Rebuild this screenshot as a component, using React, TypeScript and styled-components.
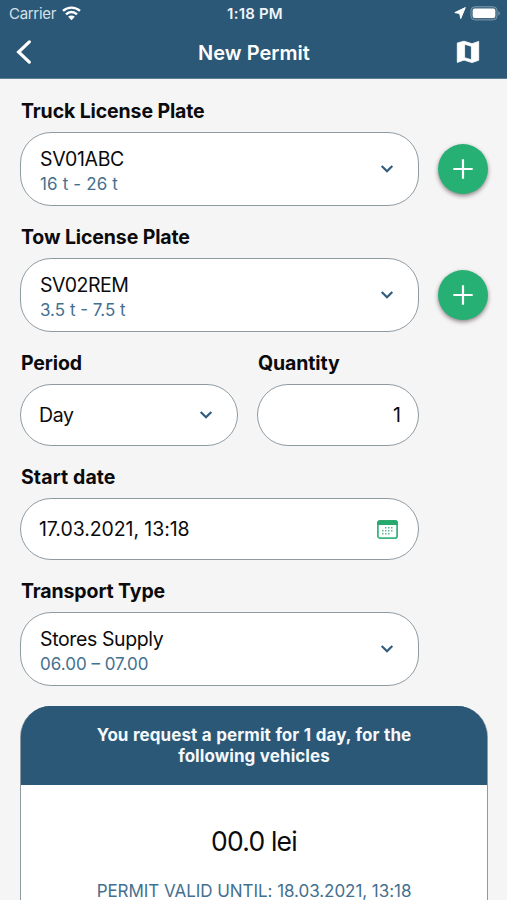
import React from "react";
import styled, { createGlobalStyle } from "styled-components";

const navy = "#2b5876";
const green = "#27b074";
const outline = "#8f9ba3";

const GlobalStyle = createGlobalStyle`
  * { box-sizing: border-box; }
  body { margin: 0; background: #f5f5f5; }
`;

const Screen = styled.div`
  width: 507px;
  height: 900px;
  overflow: hidden;
  background: #f5f5f5;
  color: #0b0b0d;
  font-family: Inter, "Liberation Sans", sans-serif;
  white-space: nowrap;
`;

const TopBar = styled.header`
  height: 79px;
  background: ${navy};
  color: #fff;
  border-bottom: 1px solid #5c7f96;
`;

const StatusBar = styled.div`
  display: grid;
  grid-template-columns: 1fr auto 1fr;
  align-items: center;
  height: 27px;
  padding: 0 6px 0 9px;
`;

const Carrier = styled.div`
  display: flex;
  align-items: center;
  gap: 6px;
  color: #d5e0e8;
  font-size: 15px;
  letter-spacing: -0.3px;
`;

const Clock = styled.div`
  font-size: 15px;
  font-weight: 600;
  letter-spacing: 0.2px;
  color: #eef4f8;
`;

const StatusIcons = styled.div`
  display: flex;
  justify-content: flex-end;
  align-items: center;
  gap: 4px;
`;

const NavBar = styled.div`
  display: grid;
  grid-template-columns: 1fr auto 1fr;
  align-items: center;
  height: 50px;
  padding: 0 27px 0 16px;
`;

const NavTitle = styled.h1`
  margin: 0;
  padding: 2px 0 0 12px;
  font-size: 20px;
  line-height: 24px;
  font-weight: 600;
  letter-spacing: 0.02px;
`;

const NavButton = styled.button<{ $end?: boolean }>`
  display: flex;
  justify-self: ${(p) => (p.$end ? "end" : "start")};
  padding: 0;
  border: 0;
  background: none;
  color: #fff;
`;

const Form = styled.main`
  display: flex;
  flex-direction: column;
  gap: 20px;
  padding: 21px 19px 0 20px;
`;

const FieldRow = styled.div`
  display: grid;
  grid-template-columns: 399px 50px;
  column-gap: 19px;
  align-items: end;
`;

const SplitRow = styled.div`
  display: grid;
  grid-template-columns: 218px 162px;
  column-gap: 19px;
`;

const Field = styled.div`
  display: flex;
  flex-direction: column;
  gap: 10px;
`;

const Label = styled.label<{ $track?: number }>`
  padding-left: 1px;
  height: 22px;
  font-size: 19.5px;
  line-height: 22px;
  font-weight: 700;
  letter-spacing: ${(p) => p.$track ?? -0.12}px;
`;

const Box = styled.div<{ $tall?: boolean }>`
  display: flex;
  align-items: center;
  justify-content: space-between;
  height: ${(p) => (p.$tall ? 74 : 62)}px;
  padding: 0 ${(p) => (p.$tall ? 24 : 17)}px 0 ${(p) => (p.$tall ? 19 : 18)}px;
  border: 1px solid ${outline};
  border-radius: 31px;
  background: #fff;
`;

const Lines = styled.div`
  padding-top: 3px;
`;

const Value = styled.div<{ $track?: number }>`
  font-size: 19.5px;
  line-height: 26px;
  letter-spacing: ${(p) => p.$track ?? 0}px;
`;

const Detail = styled.div<{ $track?: number }>`
  font-size: 17px;
  line-height: 24px;
  color: #44708f;
  letter-spacing: ${(p) => p.$track ?? 0}px;
`;

const IconSlot = styled.span<{ $right?: number }>`
  display: flex;
  margin-right: ${(p) => p.$right ?? 0}px;
`;

const AddButton = styled.button`
  display: flex;
  align-items: center;
  justify-content: center;
  width: 50px;
  height: 50px;
  margin-bottom: 12px;
  padding: 0;
  border: 0;
  border-radius: 50%;
  background: ${green};
  box-shadow: 0 2px 4px rgba(40, 20, 30, 0.5);
`;

const Summary = styled.section`
  width: 468px;
  height: 260px;
  overflow: hidden;
  border: 1px solid ${outline};
  border-top: 0;
  border-radius: 31px 31px 0 0;
  background: linear-gradient(${navy} 79px, #fff 79px) border-box;
  text-align: center;
`;

const SummaryHead = styled.div`
  height: 79px;
  padding-top: 19px;
  background: ${navy};
  color: #f4f8fb;
  font-size: 17px;
  line-height: 21px;
  font-weight: 700;
  letter-spacing: 0.06px;
  word-spacing: 0.45px;
`;

const Price = styled.div`
  margin-top: 38px;
  font-size: 26.5px;
  line-height: 36px;
  letter-spacing: -0.8px;
`;

const Validity = styled.div`
  margin-top: 20px;
  font-size: 17px;
  line-height: 24px;
  letter-spacing: -0.05px;
  color: #44708f;
`;

const WifiIcon = () => (
  <svg width="19" height="15" viewBox="0 0 19 15" fill="none" stroke="#fff" strokeWidth="2.4">
    <path d="M1 4.8C5.8.5 13.200.5 18 4.800" />
    <path d="M4 8.300C7.200 5.300 11.800 5.300 15 8.300" />
    <path d="M6.100 10.800C8.200 9 10.800 9 12.900 10.800L9.500 14.200Z" fill="#fff" stroke="none" />
  </svg>
);

const LocationIcon = () => (
  <svg width="12" height="13" viewBox="0 0 12 13">
    <path
      d="M11.300.6.8 5.600 5.700 6.500 6.700 11.600Z"
      fill="#fff"
      stroke="#fff"
      strokeWidth="1"
      strokeLinejoin="round"
    />
  </svg>
);

const BatteryIcon = () => (
  <svg width="31" height="15" viewBox="0 0 31 15">
    <rect x="0.900" y="0.700" width="26.200" height="13.200" rx="4" fill="#41687f" stroke="#7895a8" strokeWidth="1" />
    <rect x="2.700" y="2.600" width="22.600" height="9.400" rx="2" fill="#fff" />
    <path d="M28.500 5Q31 7.300 28.500 9.800Z" fill="#8ca6b6" />
  </svg>
);

const BackIcon = () => (
  <svg width="16" height="24" viewBox="0 0 16 24" fill="none" stroke="#fff" strokeWidth="3.200">
    <path d="M13.300 1.900 2.600 12 13.300 22.100" strokeLinejoin="miter" strokeLinecap="round" />
  </svg>
);

const MapIcon = () => (
  <svg width="24" height="24" viewBox="0 0 24 24">
    <path
      fill="#fff"
      fillRule="evenodd"
      stroke="#fff"
      strokeWidth="0.800"
      strokeLinejoin="round"
      d="M1.300 3 8 1.200 16 3.700 22.700 1.400V20.300L16 22.600 8 20.100 1.300 22.400ZM8.600 4.200V17.700L15.400 19.800V6.300Z"
    />
  </svg>
);

const ChevronIcon = () => (
  <svg width="14" height="10" viewBox="0 0 14 10" fill="none" stroke="#2f5d80" strokeWidth="2.200">
    <path d="M1.700 2 7 7.300 12.300 2" />
  </svg>
);

const PlusIcon = () => (
  <svg width="20" height="20" viewBox="0 0 20 20" fill="none" stroke="#fff" strokeWidth="2.200">
    <path d="M10 .3V19.700M.3 10H19.700" />
  </svg>
);

const days = [
  [9, 8], [12, 8], [15, 8],
  [6, 11], [9, 11], [12, 11], [15, 11],
  [6, 14], [9, 14], [12, 14],
];

const CalendarIcon = () => (
  <svg width="21" height="19" viewBox="0 0 21 19">
    <rect x="0.900" y="0.900" width="19.200" height="17.200" rx="2.200" fill="#fff" stroke="#3db581" strokeWidth="1.800" />
    <path d="M.2 5V2.800Q.2.200 2.800.2H18.200Q20.800.2 20.800 2.800V5Z" fill="#27a86d" />
    {days.map(([x, y]) => (
      <rect key={`${x}-${y}`} x={x - 1} y={y - 1} width="1.500" height="1.500" fill="#62b892" />
    ))}
  </svg>
);

type PlateProps = {
  label: string;
  value: string;
  detail: string;
  valueTrack?: number;
  detailTrack?: number;
  addable?: boolean;
};

const PlateField = ({ label, value, detail, valueTrack, detailTrack, addable }: PlateProps) => (
  <FieldRow>
    <Field>
      <Label>{label}</Label>
      <Box $tall>
        <Lines>
          <Value $track={valueTrack}>{value}</Value>
          <Detail $track={detailTrack}>{detail}</Detail>
        </Lines>
        <IconSlot>
          <ChevronIcon />
        </IconSlot>
      </Box>
    </Field>
    {addable && (
      <AddButton aria-label={`Add ${label}`}>
        <PlusIcon />
      </AddButton>
    )}
  </FieldRow>
);

export default function App() {
  return (
    <Screen>
      <GlobalStyle />
      <TopBar>
        <StatusBar>
          <Carrier>
            Carrier
            <WifiIcon />
          </Carrier>
          <Clock>1:18 PM</Clock>
          <StatusIcons>
            <LocationIcon />
            <BatteryIcon />
          </StatusIcons>
        </StatusBar>
        <NavBar>
          <NavButton aria-label="Back">
            <BackIcon />
          </NavButton>
          <NavTitle>New Permit</NavTitle>
          <NavButton $end aria-label="Map">
            <MapIcon />
          </NavButton>
        </NavBar>
      </TopBar>
      <Form>
        <PlateField
          label="Truck License Plate"
          value="SV01ABC"
          detail="16 t - 26 t"
          valueTrack={-0.35}
          detailTrack={0.15}
          addable
        />
        <PlateField
          label="Tow License Plate"
          value="SV02REM"
          detail="3.5 t - 7.5 t"
          valueTrack={-0.5}
          addable
        />
        <SplitRow>
          <Field>
            <Label>Period</Label>
            <Box>
              <Value $track={-0.4}>Day</Value>
              <IconSlot $right={7}>
                <ChevronIcon />
              </IconSlot>
            </Box>
          </Field>
          <Field>
            <Label>Quantity</Label>
            <Box>
              <span />
              <Value>1</Value>
            </Box>
          </Field>
        </SplitRow>
        <FieldRow>
          <Field>
            <Label $track={0.1}>Start date</Label>
            <Box>
              <Value $track={-0.08}>17.03.2021, 13:18</Value>
              <IconSlot $right={3}>
                <CalendarIcon />
              </IconSlot>
            </Box>
          </Field>
        </FieldRow>
        <PlateField
          label="Transport Type"
          value="Stores Supply"
          detail="06.00 – 07.00"
          valueTrack={-0.38}
        />
        <Summary>
          <SummaryHead>
            You request a permit for 1 day, for the
            <br />
            following vehicles
          </SummaryHead>
          <Price>00.0 lei</Price>
          <Validity>PERMIT VALID UNTIL: 18.03.2021, 13:18</Validity>
        </Summary>
      </Form>
    </Screen>
  );
}
